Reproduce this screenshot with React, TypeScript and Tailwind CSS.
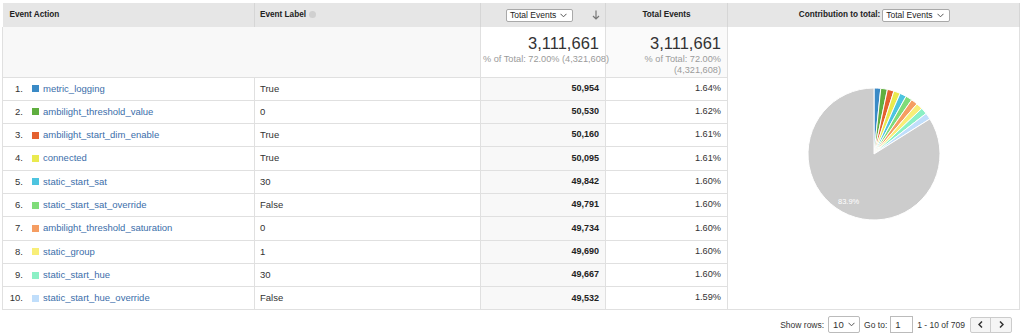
import React from 'react';

const rows = [
  { action: 'metric_logging', label: 'True', events: '50,954', pct: '1.64%', color: '#3a8ac6' },
  { action: 'ambilight_threshold_value', label: '0', events: '50,530', pct: '1.62%', color: '#5fae3f' },
  { action: 'ambilight_start_dim_enable', label: 'True', events: '50,160', pct: '1.61%', color: '#e4612f' },
  { action: 'connected', label: 'True', events: '50,095', pct: '1.61%', color: '#eaea4f' },
  { action: 'static_start_sat', label: '30', events: '49,842', pct: '1.60%', color: '#4dc4df' },
  { action: 'static_start_sat_override', label: 'False', events: '49,791', pct: '1.60%', color: '#7fdc79' },
  { action: 'ambilight_threshold_saturation', label: '0', events: '49,734', pct: '1.60%', color: '#f59d62' },
  { action: 'static_group', label: '1', events: '49,690', pct: '1.60%', color: '#f8ee78' },
  { action: 'static_start_hue', label: '30', events: '49,667', pct: '1.60%', color: '#8bf0c5' },
  { action: 'static_start_hue_override', label: 'False', events: '49,532', pct: '1.59%', color: '#c0defb' },
];

const Chevron = () => (
  <svg width="7" height="5" viewBox="0 0 7 5" className="shrink-0">
    <path d="M0.5 0.8 L3.5 3.8 L6.5 0.8" fill="none" stroke="#555" strokeWidth="1" />
  </svg>
);

const Select = ({ text, w }: { text: string; w: string }) => (
  <span className={`inline-flex items-center justify-between h-[13px] ${w} border border-[#a9a9a9] rounded-[2px] bg-white pl-[3px] pr-[5px] text-[8.5px] font-normal text-[#222] leading-none whitespace-nowrap`}>
    {text}
    <Chevron />
  </span>
);

const Pie = () => {
  const cx = 67, cy = 67, r = 66;
  const values = rows.map(r => parseFloat(r.pct));
  const rest = 100 - values.reduce((a, b) => a + b, 0);
  const all = [...values.map((v, i) => ({ v, c: rows[i].color })), { v: rest, c: '#cccccc' }];
  let a = 0;
  const pt = (ang: number) => [cx + r * Math.sin(ang), cy - r * Math.cos(ang)];
  return (
    <svg width="134" height="134" viewBox="0 0 134 134">
      {all.map((s, i) => {
        const a0 = a;
        a += (s.v / 100) * Math.PI * 2;
        const [x0, y0] = pt(a0);
        const [x1, y1] = pt(a);
        const large = a - a0 > Math.PI ? 1 : 0;
        return (
          <path key={i} d={`M${cx} ${cy} L${x0} ${y0} A${r} ${r} 0 ${large} 1 ${x1} ${y1} Z`} fill={s.c} stroke="#fff" strokeWidth="1" strokeLinejoin="round" />
        );
      })}
      <text x="31" y="117" fontSize="7.5" fill="#fff" fontFamily="Liberation Sans, Arial, sans-serif">83.9%</text>
    </svg>
  );
};

export default function App() {
  return (
    <div className="w-[1024px] h-[335px] bg-white pt-[3px] pl-[2px] text-[9.5px] text-[#333]" style={{ fontFamily: '"Liberation Sans", Arial, sans-serif' }}>
      <table className="border-collapse table-fixed w-[1017px]">
        <colgroup>
          <col className="w-[252px]" />
          <col className="w-[226px]" />
          <col className="w-[125px]" />
          <col className="w-[122px]" />
          <col className="w-[292px]" />
        </colgroup>
        <thead>
          <tr className="h-[24px] bg-[#e6e6e6] font-bold text-[8.2px] text-[#222]">
            <th className="text-left pl-[7px] border-r border-[#d6d6d6]">Event Action</th>
            <th className="text-left pl-[5px] border-r border-[#d6d6d6]">
              <span className="inline-flex items-center gap-[3px]">Event Label
                <span className="inline-block w-[7px] h-[7px] rounded-full bg-[#d0d0d0]" />
              </span>
            </th>
            <th className="border-r border-[#d6d6d6] pl-[25px] pr-[5px]">
              <span className="flex items-center justify-between">
                <Select text="Total Events" w="w-[67px]" />
                <svg width="8" height="10" viewBox="0 0 8 10">
                  <path d="M4 0.5 V9 M1 6 L4 9 L7 6" fill="none" stroke="#777" strokeWidth="1.2" />
                </svg>
              </span>
            </th>
            <th className="border-r border-[#d6d6d6] text-center">Total Events</th>
            <th className="text-center border-r border-[#d6d6d6]">
              <span className="inline-flex items-center gap-[2px] pl-[2px]">Contribution to total: <Select text="Total Events" w="w-[68px]" /></span>
            </th>
          </tr>
        </thead>
        <tbody>
          <tr className="h-[50px] border-b border-[#e0e0e0]">
            <td className="bg-[#f8f8f8] border-l border-[#e0e0e0]" />
            <td className="bg-[#f8f8f8]" />
            <td className="bg-white text-right pr-[6px] pl-[2px] align-top pt-[6px] border-l border-[#e0e0e0]">
              <div className="text-[16.5px] leading-[20px] text-[#333]">3,111,661</div>
              <div className="text-[9.2px] leading-[12px] text-[#9a9a9a] whitespace-nowrap">% of Total: 72.00% (4,321,608)</div>
            </td>
            <td className="bg-[#fafafa] text-right pr-[6px] align-top pt-[6px] border-l border-[#e0e0e0]">
              <div className="text-[16.5px] leading-[20px] text-[#333]">3,111,661</div>
              <div className="text-[9.2px] leading-[12px] text-[#9a9a9a]">% of Total: 72.00%</div>
              <div className="text-[9.2px] leading-[11px] text-[#9a9a9a]">(4,321,608)</div>
            </td>
            <td rowSpan={11} className="bg-white align-top border-l border-r border-b border-[#e0e0e0] pl-[79px] pt-[60px]">
              <Pie />
            </td>
          </tr>
          {rows.map((r, i) => (
            <tr key={r.action} className="h-[23.3px] border-b border-[#e0e0e0]">
              <td className="border-l border-r border-[#e0e0e0] bg-white">
                <span className="flex items-center">
                  <span className="w-[20px] text-right text-[#333]">{i + 1}.</span>
                  <span className="w-[7px] h-[7px] ml-[9px] mr-[4px]" style={{ background: r.color }} />
                  <span className="text-[#3b6eaa]">{r.action}</span>
                </span>
              </td>
              <td className="pl-[5px] border-r border-[#e0e0e0] bg-white">{r.label}</td>
              <td className="bg-[#f8f8f8] text-right pr-[6px] font-bold text-[9px] text-[#222] border-r border-[#e0e0e0]">{r.events}</td>
              <td className="bg-white text-right pr-[6px] text-[9.2px]">{r.pct}</td>
            </tr>
          ))}
        </tbody>
      </table>
      <div className="flex items-center justify-end w-[1017px] pr-[7px] pt-[6px] text-[8.5px] text-[#333]">
        <span>Show rows:</span>
        <span className="inline-flex items-center justify-between ml-[4px] w-[32px] h-[17px] border border-[#bbb] rounded-[2px] px-[4px] text-[9.5px]">
          10
          <Chevron />
        </span>
        <span className="ml-[4px]">Go to:</span>
        <span className="inline-flex items-center ml-[3px] w-[23px] h-[17px] border border-[#bbb] px-[4px] text-[9.5px]">1</span>
        <span className="ml-[4px]">1 - 10 of 709</span>
        <span className="inline-flex ml-[5px] h-[16px] border border-[#ccc] rounded-[2px] bg-[#f5f5f5]">
          <span className="w-[20px] flex items-center justify-center border-r border-[#ccc]">
            <svg width="5" height="7" viewBox="0 0 5 7"><path d="M4 0.5 L1 3.5 L4 6.5" fill="none" stroke="#333" strokeWidth="1.5" /></svg>
          </span>
          <span className="w-[20px] flex items-center justify-center">
            <svg width="5" height="7" viewBox="0 0 5 7"><path d="M1 0.5 L4 3.5 L1 6.5" fill="none" stroke="#333" strokeWidth="1.5" /></svg>
          </span>
        </span>
      </div>
    </div>
  );
}
